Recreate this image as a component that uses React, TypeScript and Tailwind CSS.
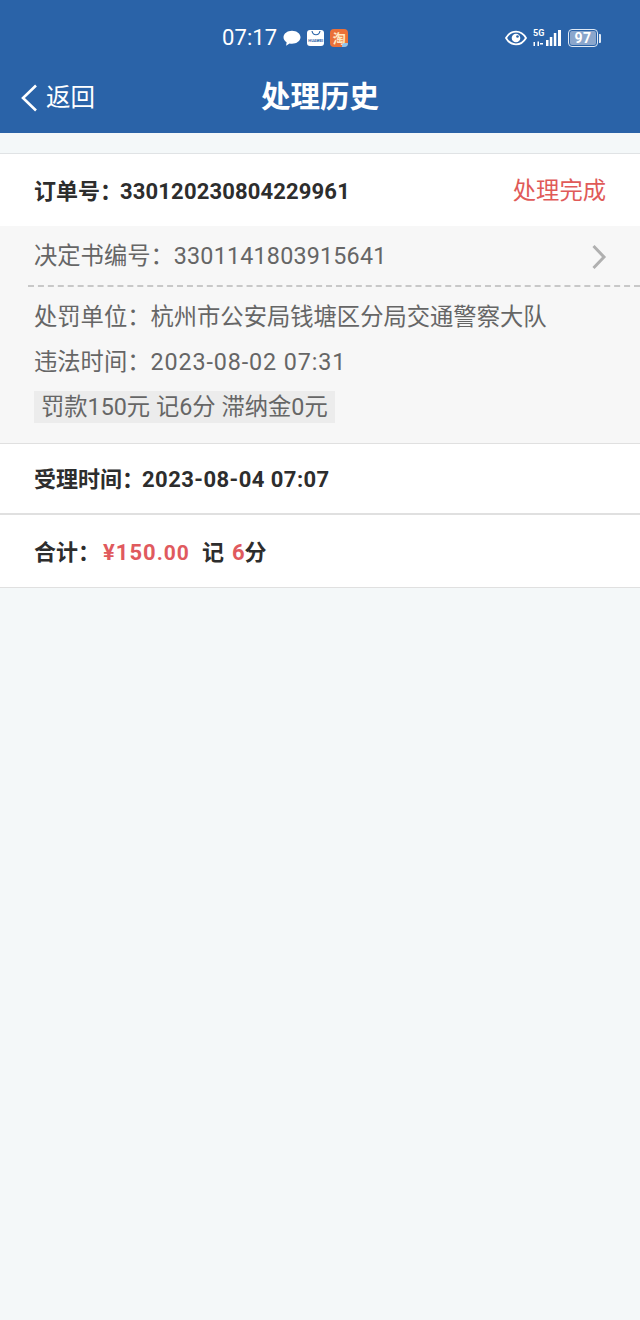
const font = { fontFamily: '"Roboto", "Noto Sans CJK SC", sans-serif' };

const StatusBar = () => (
  <div className="flex h-[75px] items-center pt-[1px] relative text-white">
    <div className="ml-[222px] flex items-center">
      <span className="text-[22px] leading-none tracking-[0.1px]">07:17</span>
      <svg width="18" height="17" viewBox="0 0 18 17" className="ml-[6px]">
        <path d="M9 .8C4.400.8.500 3.700.500 7.300c0 2 1.200 3.800 3.100 5l-.5 3.400 3.500-2.200c.8.200 1.600.3 2.400.3 4.600 0 8.500-2.900 8.500-6.500S13.600.8 9 .8z" fill="#fff" />
      </svg>
      <div className="ml-[6px] h-[16px] w-[17px] rounded-[3px] bg-white flex flex-col items-center">
        <svg width="12" height="8" viewBox="0 0 12 8"><path d="M2 1c1 5 7 5 8 0" fill="none" stroke="#2a63a8" strokeWidth="1.200" /></svg>
        <span className="text-[4px] leading-[5px] font-bold text-[#2a63a8]">HUAWEI</span>
      </div>
      <div className="ml-[6px] h-[18px] w-[18px] rounded-[4px] bg-[#ea7038] flex items-center justify-center relative overflow-hidden">
        <span className="text-[13px] leading-none font-bold text-[#ffe9c4]">淘</span>
        <span className="absolute right-0 bottom-0 h-[4px] w-[6px] rounded-tl-[3px] bg-[#8ec4ee]" />
      </div>
    </div>
    <div className="ml-auto mr-[39px] flex items-center">
      <svg width="22" height="16" viewBox="0 0 22 16">
        <path d="M1 8c2.500-4.300 6-6.400 10-6.400S18.500 3.700 21 8c-2.500 4.300-6 6.400-10 6.400S3.500 12.300 1 8z" fill="none" stroke="#fff" strokeWidth="1.800" />
        <circle cx="11" cy="8" r="4.300" fill="#fff" />
        <circle cx="12.500" cy="6.500" r="1.300" fill="#2a63a8" />
      </svg>
      <div className="ml-[5px] relative w-[30px] h-[18px]">
        <svg width="30" height="18" viewBox="0 0 30 18">
          <g fill="#fff">
            <rect x="14" y="11" width="2.500" height="6" />
            <rect x="17.800" y="8" width="2.500" height="9" />
            <rect x="21.800" y="4" width="2.500" height="13" />
            <rect x="26" y="1" width="3" height="16" />
            <rect x="1.500" y="13" width="1.500" height="4" />
            <rect x="5.500" y="12.500" width="1.500" height="4.500" />
            <rect x="8" y="14" width="3" height="1.500" />
          </g>
        </svg>
        <span className="absolute left-[1px] top-[0px] text-[9px] leading-[9px] font-bold">5G</span>
      </div>
      <div className="ml-[6px] flex items-center">
        <div className="h-[18px] w-[30px] rounded-[4px] border-[1.500px] border-[#dfe9f5] p-[1px]">
          <div className="h-full rounded-[2px] bg-[#8aa6cc] flex items-center justify-center text-[14px] leading-none font-bold tracking-[0.5px]">97</div>
        </div>
        <div className="ml-[1px] h-[9px] w-[2px] rounded-r-[1px] bg-[#dfe9f5]" />
      </div>
    </div>
  </div>
);

export default function App() {
  return (
    <div style={font} className="min-h-[1320px] w-[640px] bg-[#f4f8f9]">
      <div className="h-[133px] bg-[#2a63a8]">
        <StatusBar />
        <div className="relative flex h-[44px] items-center justify-center mt-[1px] text-white">
          <div className="absolute left-[20px] flex items-center">
            <svg width="18" height="30" viewBox="0 0 18 30">
              <path d="M16 2.500 3 15l13 12.500" fill="none" stroke="#fff" strokeWidth="2.600" />
            </svg>
            <span className="ml-[8px] text-[24.500px] leading-none">返回</span>
          </div>
          <span className="text-[29.500px] font-bold leading-none">处理历史</span>
        </div>
      </div>

      <div className="mt-[20px] border-t border-[#e0e3e5] bg-white">
        <div className="flex h-[72px] items-center justify-between pt-[2px] pl-[34px] pr-[34px]">
          <span className="text-[22px] font-bold text-[#2d2d2d]">
            <span className="mr-[-2px]">{'订单号\uFF1A'}</span>
            <span className="tracking-[0.15px]">330120230804229961</span>
          </span>
          <span className="mt-[1px] text-[23.300px] text-[#e05a58]">处理完成</span>
        </div>
      </div>

      <div className="border-b border-[#e0e0e0] bg-[#f7f7f7] h-[218px] text-[23.300px] text-[#666666]">
        <div className="flex h-[59px] items-center justify-between pt-[2px] pl-[34px] pr-[33px]">
          <span>{'决定书编号\uFF1A'}<span className="tracking-[0.2px]">3301141803915641</span></span>
          <svg width="16" height="26" viewBox="0 0 16 26">
            <path d="M2.500 2 13 13 2.500 24" fill="none" stroke="#b0b0b0" strokeWidth="3" />
          </svg>
        </div>
        <div className="ml-[28px] border-t-2 border-dashed border-[#c8c8c8]" />
        <div className="flex flex-col items-start px-[34px]">
          <span className="mt-[14px] leading-[32px]">{'处罚单位\uFF1A杭州市公安局钱塘区分局交通警察大队'}</span>
          <span className="mt-[13px] leading-[32px]">{'违法时间\uFF1A'}<span className="tracking-[0.9px]">2023-08-02 07:31</span></span>
          <span className="mt-[13px] h-[32px] bg-[#ececec] px-[7px] leading-[32px]">罚款150元 记6分 滞纳金0元</span>
        </div>
      </div>

      <div className="flex h-[71px] items-center border-b-2 border-[#e0e0e0] bg-white pt-[1px] px-[34px] text-[22px] font-bold text-[#2d2d2d]">
        <span className="mr-[-2px]">{'受理时间\uFF1A'}</span>
        <span className="tracking-[0.45px]">2023-08-04 07:07</span>
      </div>

      <div className="flex h-[73px] items-center border-b border-[#e0e0e0] bg-white pt-[3px] px-[34px] text-[22px] font-bold text-[#2d2d2d]">
        <span className="mr-[3px]">{'合计\uFF1A'}</span>
        <span className="text-[#e05a5e] tracking-[1px]">¥150<span className="text-[21px]">.00</span></span>
        <span className="ml-[12px]">记<span className="ml-[8px] text-[#e05a5e]">6</span>分</span>
      </div>
    </div>
  );
}
